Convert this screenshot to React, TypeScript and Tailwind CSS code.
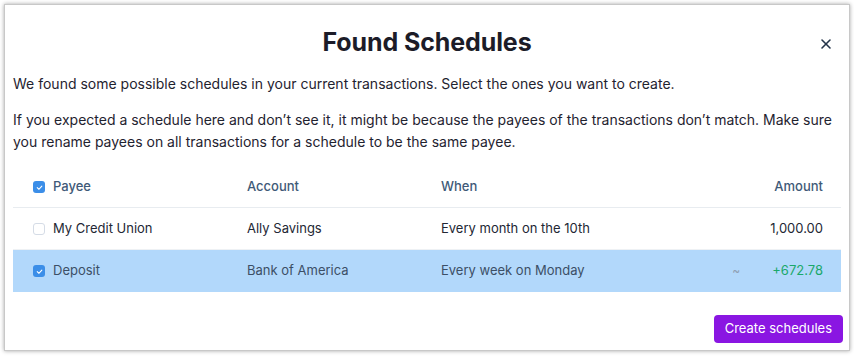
import { X } from "lucide-react";

type Row = {
  payee: string;
  account: string;
  when: string;
  amount: string;
  selected: boolean;
  fuzzy?: boolean;
};

const rows: Row[] = [
  { payee: "My Credit Union", account: "Ally Savings", when: "Every month on the 10th", amount: "1,000.00", selected: false },
  { payee: "Deposit", account: "Bank of America", when: "Every week on Monday", amount: "+672.78", selected: true, fuzzy: true },
];

function Check({ on }: { on: boolean }) {
  return on ? (
    <span className="w-[12px] h-[12px] rounded-[3px] bg-[#3b8ee8] flex items-center justify-center shrink-0">
      <svg width="9" height="9" viewBox="0 0 10 10" fill="none">
        <path d="M2.5 5.2 4.3 7 7.6 3.4" stroke="white" strokeWidth="1.2" strokeLinecap="round" strokeLinejoin="round" />
      </svg>
    </span>
  ) : (
    <span className="w-[12px] h-[12px] rounded-[3px] border border-[#d5dce6] bg-white shrink-0" />
  );
}

export default function App() {
  return (
    <div className="w-[854px] h-[356px] bg-white p-[4px] font-['Inter',sans-serif]">
      <div className="h-[347px] w-[846px] border border-[#c8c8c8] shadow-[0_0_4px_rgba(0,0,0,0.35)] flex flex-col px-[8px] text-[#1e1e2a]">
        <div className="relative h-[68px] flex items-center justify-center pt-[8px]">
          <h1 className="text-[25px] font-bold text-[#1c1c28] tracking-[-0.1px]">Found Schedules</h1>
          <X className="absolute right-[7px] top-[31px] w-[16px] h-[16px] text-[#24344a]" strokeWidth={2.4} />
        </div>
        <p className="text-[14px] leading-[22px] text-[#1f2330]">
          We found some possible schedules in your current transactions. Select the ones you want to create.
        </p>
        <p className="text-[14px] leading-[22px] mt-[14px] text-[#1f2330] pr-[6px]">
          If you expected a schedule here and don’t see it, it might be because the payees of the transactions don’t match. Make sure you rename payees on all transactions for a schedule to be the same payee.
        </p>
        <div className="mt-[14px] text-[13px]">
          <div className="h-[41px] flex items-center border-b border-[#e8ecf0] text-[#3f5a78] font-medium">
            <div className="w-[234px] flex items-center gap-[8px] pl-[20px]"><Check on /><span>Payee</span></div>
            <div className="w-[194px]">Account</div>
            <div className="flex-1">When</div>
            <div className="pr-[18px]">Amount</div>
          </div>
          {rows.map((r) => (
            <div
              key={r.payee}
              className={`h-[42px] flex items-center ${r.selected ? "bg-[#b2d8fb] text-[#3c4f66]" : "bg-white text-[#232734] border-b border-[#eef1f4]"}`}
            >
              <div className="w-[234px] flex items-center gap-[8px] pl-[20px]"><Check on={r.selected} /><span>{r.payee}</span></div>
              <div className="w-[194px]">{r.account}</div>
              <div className="flex-1">{r.when}</div>
              {r.fuzzy && <div className="w-[20px] text-[#8fa0b4] text-[12px] mr-[20px]">~</div>}
              <div className={`pr-[18px] ${r.amount.startsWith("+") ? "text-[#1aa86a]" : ""}`}>{r.amount}</div>
            </div>
          ))}
        </div>
        <div className="mt-auto mb-[7px] flex justify-end -mr-[2px]">
          <button className="h-[28px] px-[11px] rounded-[4px] bg-[#8a16e2] text-white text-[13px]">Create schedules</button>
        </div>
      </div>
    </div>
  );
}
